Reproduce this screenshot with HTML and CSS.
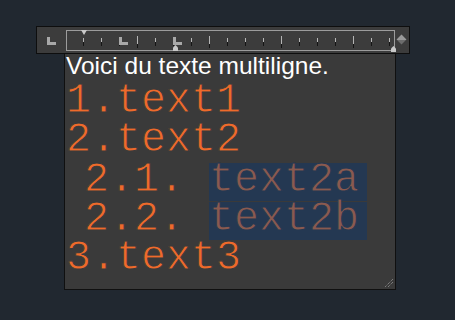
FILE: index.html
```html
<!DOCTYPE html>
<html>
<head>
<meta charset="utf-8">
<link rel="stylesheet" href="styles.css">
</head>
<body>
<div class="stage">
  <div class="ruler">
    <span class="tabmode"></span>
    <div class="scale">
      <span class="cell"><i class="tick"></i></span>
      <span class="cell"><i class="tick"></i></span>
      <span class="cell"><i class="tick"></i></span>
      <span class="cell"><i class="tick tall"></i></span>
      <span class="cell"><i class="tick"></i></span>
      <span class="cell"><i class="tick"></i></span>
      <span class="cell"><i class="tick"></i></span>
      <span class="cell"><i class="tick tall"></i></span>
      <span class="cell"><i class="tick"></i></span>
      <span class="cell"><i class="tick"></i></span>
      <span class="cell"><i class="tick"></i></span>
      <span class="cell"><i class="tick tall"></i></span>
      <span class="cell"><i class="tick"></i></span>
      <span class="cell"><i class="tick"></i></span>
      <span class="cell"><i class="tick"></i></span>
      <span class="cell"><i class="tick tall"></i></span>
      <span class="cell"><i class="tick"></i></span>
      <span class="cell"><i class="tick"></i></span>
      <span class="indent-first"></span>
      <span class="tabstop tab-a"></span>
      <span class="tabstop tab-b"></span>
      <span class="house house-a"></span>
      <span class="house house-b"></span>
    </div>
    <span class="diamond"></span>
  </div>
  <div class="editor">
    <p class="plain">Voici du texte multiligne.</p>
    <div class="line">1.text1</div>
    <div class="line">2.text2</div>
    <div class="line sub">2.1. <span class="sel">text2a</span></div>
    <div class="line sub">2.2. <span class="sel">text2b</span></div>
    <div class="line">3.text3</div>
    <svg class="grip" width="10" height="10" viewBox="0 0 10 10">
      <path d="M9 1 L1 9 M9 4 L4 9" stroke="#9a9a9a" stroke-width="1" stroke-dasharray="1 1" fill="none"/>
    </svg>
  </div>
</div>
</body>
</html>
```
FILE: styles.css
```css
html, body {
  margin: 0;
  padding: 0;
  background: #212830;
  height: 100%;
}
.stage {
  padding: 26px 0 0 36px;
}
.ruler {
  box-sizing: border-box;
  width: 374px;
  height: 28px;
  background: #3c3c3c;
  border: 1px solid #0e0e0e;
  display: flex;
  align-items: flex-start;
}
.tabmode {
  width: 9px;
  height: 8px;
  margin: 10px 0 0 10px;
  background:
    linear-gradient(#a8a8a8, #a8a8a8) left top / 3px 100% no-repeat,
    linear-gradient(#a8a8a8, #a8a8a8) left bottom / 100% 3px no-repeat;
}
.scale {
  position: relative;
  box-sizing: border-box;
  width: 329px;
  height: 21px;
  margin: 3px 0 0 10px;
  border: 1px solid #9c9c9c;
  display: flex;
  align-items: center;
}
.cell {
  width: 18px;
  height: 100%;
  display: flex;
  justify-content: flex-end;
  align-items: center;
}
.tick {
  display: block;
  width: 1px;
  height: 8px;
  margin-right: 1px;
  margin-top: 2px;
  background: linear-gradient(#b4b4b4 0 55%, #141414 55% 100%);
}
.tick.tall {
  height: 12px;
  margin-top: 2px;
  background: linear-gradient(#b4b4b4 0 65%, #141414 65% 100%);
}
.indent-first {
  position: absolute;
  left: 14px;
  top: -1px;
  width: 0;
  height: 0;
  border-left: 3.5px solid transparent;
  border-right: 3.5px solid transparent;
  border-top: 5px solid #c8c8c8;
}
.tabstop {
  position: absolute;
  top: 6px;
  width: 9px;
  height: 8px;
  background:
    linear-gradient(#a8a8a8, #a8a8a8) left top / 3px 100% no-repeat,
    linear-gradient(#a8a8a8, #a8a8a8) left bottom / 100% 3px no-repeat;
}
.tab-a { left: 52px; }
.tab-b { left: 106px; }
.house {
  position: absolute;
  width: 5px;
  height: 6px;
  background: #c8c8c8;
  clip-path: polygon(50% 0, 100% 40%, 100% 100%, 0 100%, 0 40%);
}
.house-a { left: 106px; top: 14px; }
.house-b { left: 324px; top: 15px; }
.diamond {
  width: 7px;
  height: 7px;
  margin: 9px 0 0 3px;
  background: linear-gradient(135deg, #9a9a9a 0 50%, #6c6c6c 50% 100%);
  transform: rotate(45deg);
}
.editor {
  position: relative;
  box-sizing: border-box;
  width: 332px;
  height: 236px;
  margin-left: 28px;
  background: #3a3a3a;
  border: 1px solid #101010;
  border-top: 0;
  padding-left: 1px;
}
.plain {
  margin: 0 0 5px 0;
  font-family: "Liberation Sans", Arial, sans-serif;
  font-size: 24.5px;
  line-height: 23px;
  color: #ffffff;
  white-space: nowrap;
}
.line {
  font-family: "Liberation Mono", "Courier New", monospace;
  font-size: 41.67px;
  line-height: 39.35px;
  height: 39.35px;
  color: #ef6a2b;
  white-space: pre;
  -webkit-text-stroke: 0.9px #3a3a3a;
}
.line.sub {
  padding-left: 18px;
}
.sel {
  display: inline-block;
  line-height: 34px;
  padding: 0 8px 4px 0;
  background: #243852;
  color: #8a5a4f;
  vertical-align: baseline;
  -webkit-text-stroke: 0.9px #243852;
}
.grip {
  position: absolute;
  right: 1px;
  bottom: 1px;
}
```
